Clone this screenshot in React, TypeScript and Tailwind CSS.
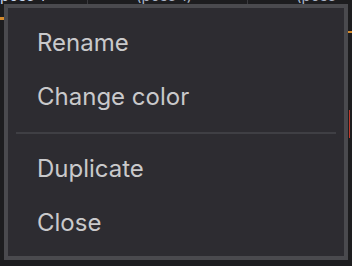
const items = [["Rename", "Change color"], ["Duplicate", "Close"]];

export default function App() {
  return (
    <div className="relative w-[352px] h-[266px] overflow-hidden bg-[#1d1d1f] font-['Inter',sans-serif]">
      {/* editor behind the menu */}
      <div className="flex flex-col h-full">
        <div className="flex -mt-[13px] h-[17px] text-[15px] leading-[17px] whitespace-nowrap">
          <div className="w-[87px] pl-[0px] text-[#c8d6ee]">pose 1</div>
          <div className="w-[160px] border-l border-[#3a3a3e] flex gap-[14px] pl-[28px]">
            <span className="text-[#8a7be0]">ᵃ</span>
            <span className="text-[#a9b3c4]">(pose 1)</span>
          </div>
          <div className="flex-1 border-l border-[#3a3a3e] flex gap-[14px] pl-[28px]">
            <span className="text-[#c36ad8]">ᵃ</span>
            <span className="text-[#a9b3c4]">(pose</span>
          </div>
        </div>
        <div className="flex justify-between mt-[13px]">
          <div className="w-[4px] h-[3px] bg-[#d48a2c]" />
          <div className="w-[4px] h-[2px] mt-[14px] bg-[#d48a2c]" />
        </div>
        <div className="flex justify-end pr-[2px] mt-[77px]">
          <div className="w-[1px] h-[28px] bg-[#c0392b]" />
        </div>
      </div>

      <div className="absolute left-[4px] top-[4px] w-[344px] h-[256px] border-4 border-[#4a4a4e] bg-[#2d2c31] pt-[8px]">
        {items.map((group, gi) => (
          <div key={gi}>
            {gi > 0 && <div className="mx-[8px] my-[8px] h-[2px] bg-[#3f3f44]" />}
            {group.map((label) => (
              <div key={label} className="h-[54px] flex items-center pl-[29px] text-[24px] text-[#c9c9cb]">
                {label}
              </div>
            ))}
          </div>
        ))}
      </div>
    </div>
  );
}
